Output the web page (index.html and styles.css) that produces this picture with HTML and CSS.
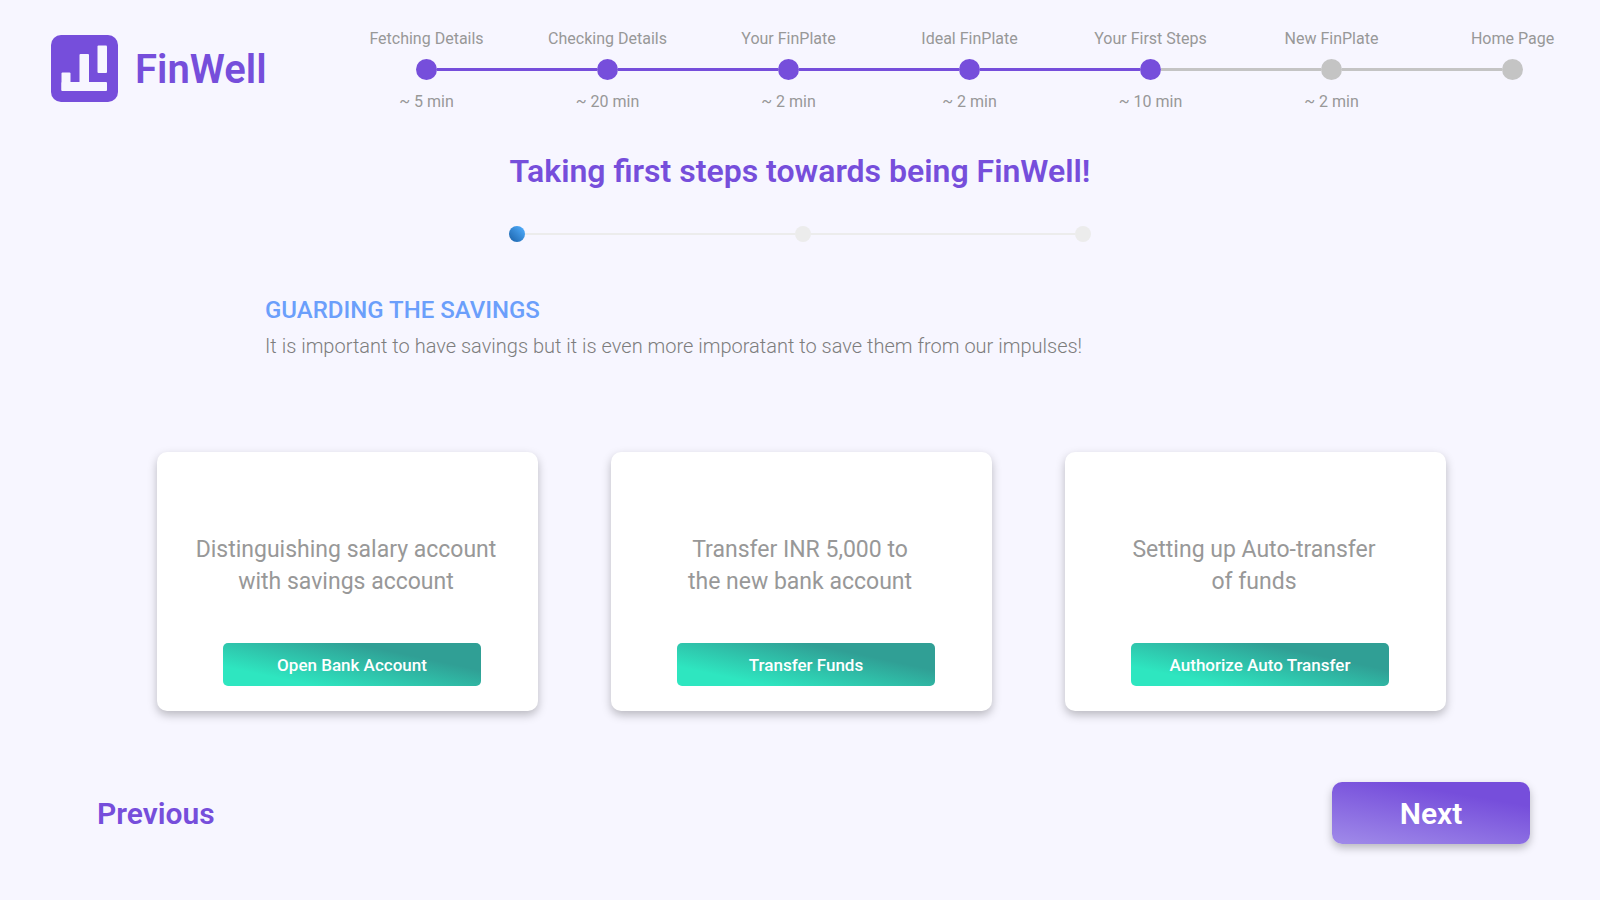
FILE: index.html
```html
<!DOCTYPE html>
<html lang="en">
<head>
<meta charset="utf-8">
<title>FinWell</title>
<link rel="stylesheet" href="styles.css">
</head>
<body>
<header class="header">
  <div class="brand">
    <svg class="brand-mark" viewBox="0 0 67 67" aria-hidden="true">
      <rect width="67" height="67" rx="10" fill="#764edb"/>
      <g fill="#f7f6ff">
        <rect x="10.5" y="47" width="45.5" height="9" rx="1"/>
        <rect x="10.5" y="37.5" width="9" height="18.5" rx="1"/>
        <rect x="28.5" y="19" width="9.5" height="34" rx="1"/>
        <rect x="46.5" y="10.5" width="9.5" height="27.5" rx="1"/>
      </g>
    </svg>
    <span class="brand-name">FinWell</span>
  </div>
  <ol class="stepper">
    <li class="step done"><div class="node"><span class="label">Fetching Details</span><span class="dot"></span><span class="label">~ 5 min</span></div></li>
    <li class="step done"><div class="node"><span class="label">Checking Details</span><span class="dot"></span><span class="label">~ 20 min</span></div></li>
    <li class="step done"><div class="node"><span class="label">Your FinPlate</span><span class="dot"></span><span class="label">~ 2 min</span></div></li>
    <li class="step done"><div class="node"><span class="label">Ideal FinPlate</span><span class="dot"></span><span class="label">~ 2 min</span></div></li>
    <li class="step current"><div class="node"><span class="label">Your First Steps</span><span class="dot"></span><span class="label">~ 10 min</span></div></li>
    <li class="step"><div class="node"><span class="label">New FinPlate</span><span class="dot"></span><span class="label">~ 2 min</span></div></li>
    <li class="step"><div class="node"><span class="label">Home Page</span><span class="dot"></span><span class="label"></span></div></li>
  </ol>
</header>
<main>
  <h1 class="title">Taking first steps towards being FinWell!</h1>
  <div class="progress" aria-hidden="true">
    <span class="mark active"></span><span class="bar"></span><span class="mark"></span><span class="bar"></span><span class="mark"></span>
  </div>
  <section class="intro">
    <h2 class="intro-title">GUARDING THE SAVINGS</h2>
    <p class="intro-text">It is important to have savings but it is even more imporatant to save them from our impulses!</p>
  </section>
  <section class="cards">
    <article class="card">
      <p class="card-text">Distinguishing salary account<br>with savings account</p>
      <button class="action" type="button">Open Bank Account</button>
    </article>
    <article class="card">
      <p class="card-text">Transfer INR 5,000 to<br>the new bank account</p>
      <button class="action" type="button">Transfer Funds</button>
    </article>
    <article class="card">
      <p class="card-text">Setting up Auto-transfer<br>of funds</p>
      <button class="action" type="button">Authorize Auto Transfer</button>
    </article>
  </section>
</main>
<footer class="footer">
  <button class="previous" type="button">Previous</button>
  <button class="next" type="button">Next</button>
</footer>
</body>
</html>
```
FILE: styles.css
```css
* { box-sizing: border-box; }
body, h1, h2, p, ol { margin: 0; padding: 0; }
body {
  min-height: 100vh;
  background: #f7f6ff;
  color: #989898;
  font-family: Roboto, "Liberation Sans", sans-serif;
}
button { border: 0; padding: 0; font-family: inherit; cursor: pointer; }

.header {
  display: flex;
  align-items: center;
  padding: 27px 77px 0 51px;
}
.brand {
  display: flex;
  align-items: center;
  flex: 0 0 365px;
  gap: 17px;
  padding-bottom: 2px;
}
.brand-mark { width: 67px; height: 67px; }
.brand-name { padding-top: 2px; color: #764edb; font-size: 40px; font-weight: 600; line-height: 48px; }

.stepper { display: flex; flex: 1; list-style: none; }
.step { display: flex; align-items: center; flex: 1; }
.step:last-child { flex: none; }
.step:not(:last-child)::after {
  content: "";
  flex: 1;
  height: 3px;
  background: #c4c4c4;
}
.step.done::after { background: #764edb; }
.node {
  display: flex;
  flex-direction: column;
  align-items: center;
  gap: 10px;
  width: 21px;
}
.label { height: 22px; padding-top: 2px; font-size: 16px; line-height: 20px; white-space: nowrap; }
.dot { width: 21px; height: 21px; border-radius: 50%; background: #c4c4c4; }
.done .dot, .current .dot { background: #764edb; }

.title {
  margin-top: 39px;
  color: #764edb;
  font-size: 32px;
  font-weight: 600;
  line-height: 40px;
  text-align: center;
}
.progress {
  display: flex;
  align-items: center;
  width: 582px;
  margin: 35px auto 0;
}
.mark { width: 16px; height: 16px; border-radius: 50%; background: #ececec; }
.mark.active { background: linear-gradient(225deg, #4ba6f5 15%, #1f68b0 90%); }
.bar { flex: 45; height: 2px; background: #ececec; }
.bar ~ .bar { flex: 44; }

.intro { margin-top: 54px; padding: 0 265px; }
.intro-title { color: #6b9ffb; font-size: 24px; font-weight: 500; line-height: 28px; }
.intro-text { margin-top: 10px; color: #7d7d7d; font-size: 20px; font-weight: 300; line-height: 24px; }

.cards {
  display: grid;
  grid-template-columns: repeat(3, 1fr);
  gap: 73px;
  margin-top: 94px;
  padding: 0 154px 0 157px;
}
.card {
  display: flex;
  flex-direction: column;
  align-items: center;
  padding: 82px 3px 25px 0;
  border-radius: 10px;
  background: #fff;
  box-shadow: 0 4px 10px rgba(0, 0, 0, 0.25);
}
.card-text { font-size: 23px; line-height: 32px; text-align: center; }
.action {
  width: 258px;
  height: 43px;
  margin: 45px 0 0 12px;
  border-radius: 5px;
  background: linear-gradient(12deg, #2ee6c0 20%, #309f95 72%);
  color: #fff;
  font-size: 17px;
  font-weight: 500;
}

.footer {
  display: flex;
  align-items: center;
  justify-content: space-between;
  margin-top: 71px;
  padding: 0 70px 0 97px;
}
.previous, .next { padding-top: 2px; font-size: 30px; font-weight: 600; line-height: 40px; }
.previous { background: none; color: #764edb; }
.next {
  width: 198px;
  height: 62px;
  border-radius: 10px;
  background: linear-gradient(10deg, #a08be9 0%, #764edb 75%);
  color: #fff;
  box-shadow: 0 4px 8px rgba(0, 0, 0, 0.25);
}
```
